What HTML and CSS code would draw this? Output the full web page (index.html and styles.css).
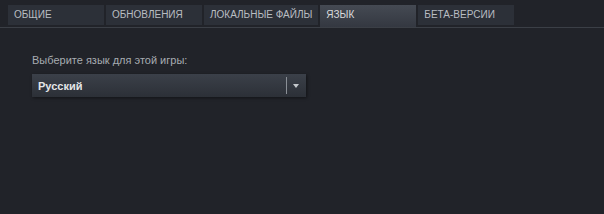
FILE: index.html
```html
<!DOCTYPE html>
<html><head>
 <meta charset="utf-8">
 <title>Свойства</title>
 <link rel="stylesheet" href="styles.css">
</head>
<body>
   <div class="tabs">
      <div class="tab">Общие</div>
      <div class="tab">Обновления</div>
      <div class="tab">Локальные файлы</div>
      <div class="tab active">Язык</div>
      <div class="tab">Бета-версии</div>
   </div>
   <div class="page">
      <div class="label">Выберите язык для этой игры:</div>
      <div class="dropdown">
         <span class="value">Русский</span>
         <span class="divider"></span>
         <span class="arrow"></span>
      </div>
   </div>
</body></html>
```

FILE: styles.css
```css
body {
  margin: 0;
  background: #212329;
  font-family: "Liberation Sans", Arial, sans-serif;
  font-size: 11px;
  color: #b8bcbf;
  height: 214px;
  overflow: hidden;
}
.tabs {
  display: flex;
  gap: 2px;
  padding: 5px 0 0 8px;
  border-bottom: 1px solid #3b3f46;
  align-items: flex-start;
}
.tab {
  min-width: 84px;
  height: 20px;
  line-height: 20px;
  padding: 0 6px;
  background: #2c3038;
  color: #b9bdc2;
  font-size: 10px;
  text-transform: uppercase;
  margin-bottom: 2px;
}
.tab.active {
  height: 22px;
  margin-bottom: 0;
  background: linear-gradient(to bottom, #454a53, #343841);
  color: #d8dadc;
}
.page {
  padding: 26px 0 0 32px;
}
.label {
  color: #a7acb1;
  font-size: 11px;
  line-height: 13px;
  margin-bottom: 7px;
}
.dropdown {
  display: flex;
  align-items: center;
  width: 274px;
  height: 23px;
  background: linear-gradient(to bottom, #3b4049, #2c3037);
  box-shadow: 1px 1px 3px rgba(0, 0, 0, 0.45);
}
.value {
  flex: 1;
  padding-left: 6px;
  color: #e4e6e8;
  font-weight: bold;
}
.divider {
  width: 1px;
  height: 17px;
  background: #8a8f96;
}
.arrow {
  width: 0;
  height: 0;
  margin: 1px 7px 0 6px;
  border-left: 3.5px solid transparent;
  border-right: 3.5px solid transparent;
  border-top: 4px solid #c4c8cc;
}
```
